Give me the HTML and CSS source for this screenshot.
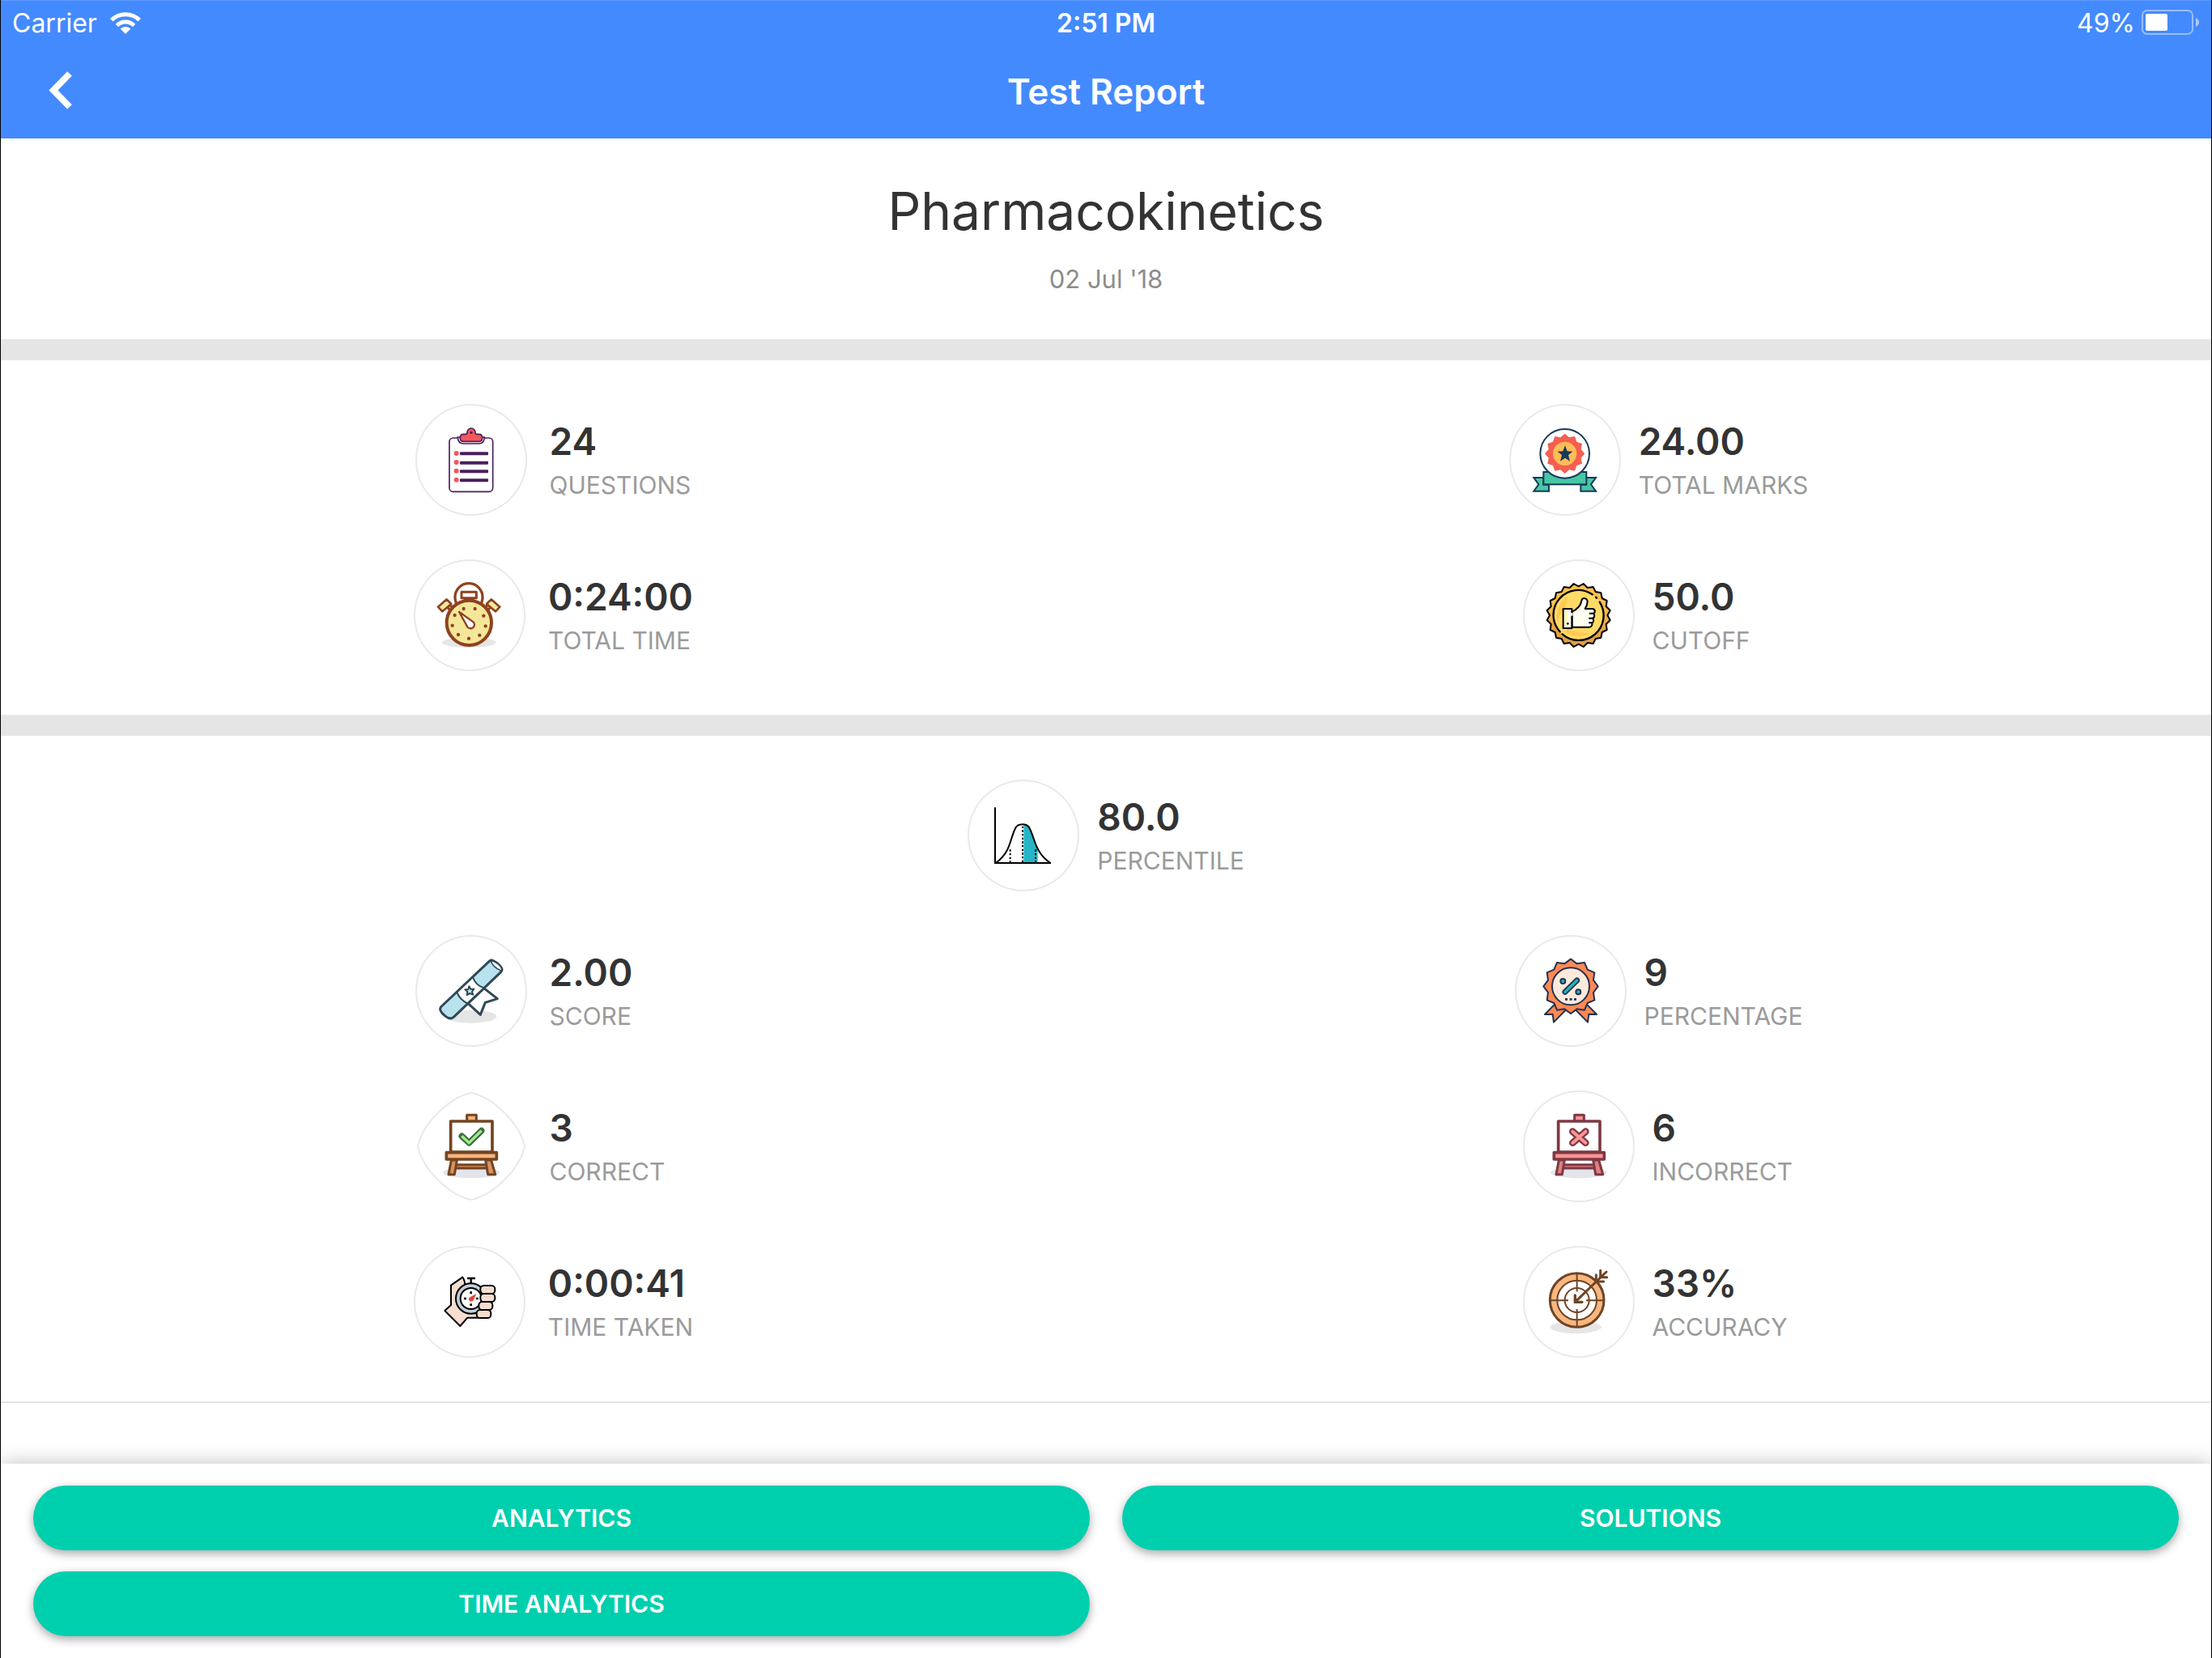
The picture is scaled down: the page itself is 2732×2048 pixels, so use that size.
FILE: index.html
```html
<!DOCTYPE html>
<html lang="en">
<head>
  <meta charset="UTF-8" />
  <meta name="viewport" content="width=device-width, initial-scale=1" />
  <title>Test Report</title>
  <link rel="stylesheet" href="styles.css">
</head>
<body>

<!-- shared easel for correct / incorrect -->
<svg class="defs" width="0" height="0" aria-hidden="true">
  <symbol id="easel" viewBox="39 606 414 414">
    <ellipse cx="246" cy="910" rx="105" ry="21" fill="#e4e4eb" />
    <g stroke="currentColor" stroke-width="9" stroke-linejoin="round">
      <rect x="188" y="881" width="116" height="13" class="easel-dark" />
      <path d="M172 864H193L184 917H162ZM320 864H299L308 917H335Z" class="easel-dark" />
      <rect x="230" y="697" width="35" height="24" class="easel-light" />
      <rect x="170" y="720" width="154" height="114" fill="#fff" stroke-width="11" />
      <rect x="154" y="836" width="186" height="25" class="easel-light" stroke-width="11" />
    </g>
  </symbol>
</svg>

<header class="header">
  <div class="status-bar">
    <div class="status-left">
      <span>Carrier</span>
      <svg class="wifi" viewBox="0 0 38 27" aria-hidden="true">
        <g fill="none" stroke="#fff" stroke-width="5">
          <path d="M1.8 9.8A24.3 24.3 0 0 1 36.2 9.8" />
          <path d="M8.4 16.4A15 15 0 0 1 29.6 16.4" />
        </g>
        <path d="M19 27L12.6 20.6A9 9 0 0 1 25.4 20.6Z" fill="#fff" />
      </svg>
    </div>
    <div class="status-time">2:51 PM</div>
    <div class="status-right">
      <span>49%</span>
      <svg class="battery" viewBox="0 0 72 32" aria-hidden="true">
        <rect x="1" y="1" width="62" height="29" rx="6" fill="none" stroke="#fff" stroke-opacity=".45" stroke-width="2" />
        <rect x="5" y="5" width="27" height="21" rx="2" fill="#fff" />
        <path d="M67 10Q71 12 71 15.500T67 21Z" fill="#fff" fill-opacity=".55" />
      </svg>
    </div>
  </div>
  <nav class="nav-bar">
    <button type="button" class="back" aria-label="Back">
      <svg viewBox="0 0 32 50" aria-hidden="true"><path d="M27 3L7 23.500L27 44" fill="none" stroke="#fff" stroke-width="8" /></svg>
    </button>
    <h1>Test Report</h1>
  </nav>
</header>

<main>

  <section class="intro">
    <h2>Pharmacokinetics</h2>
    <p>02 Jul '18</p>
  </section>

  <!-- test details -->
  <section class="stats">
    <div class="stat">
      <div class="icon">
        <svg viewBox="39 26 414 414" aria-hidden="true">
          <rect x="165" y="152" width="161" height="199" rx="14" fill="#fff" stroke="#4a1f5c" stroke-width="5" />
          <path d="M196 149Q197 173 218 173H274Q294 173 295 149Z" fill="#fff" stroke="#4a1f5c" stroke-width="5" />
          <path d="M218 138H225Q231 138 231 131A15 15 0 0 1 261 131Q261 138 267 138H275Q287 138 287 151T275 165H218Q205 165 205 151T218 138Z" fill="#f4565a" stroke="#4a1f5c" stroke-width="5" />
          <circle cx="246" cy="132" r="5" fill="#4a1f5c" />
          <g fill="#f4565a">
            <circle cx="191" cy="209" r="9" /><circle cx="191" cy="242" r="9" />
            <circle cx="191" cy="274" r="9" /><circle cx="191" cy="307" r="9" />
          </g>
          <g fill="#4a1f5c">
            <rect x="204" y="204" width="105" height="12" rx="3" /><rect x="204" y="238" width="105" height="12" rx="3" />
            <rect x="204" y="270" width="105" height="12" rx="3" /><rect x="204" y="303" width="105" height="12" rx="3" />
          </g>
        </svg>
      </div>
      <div class="stat-text"><strong>24</strong><span>QUESTIONS</span></div>
    </div>

    <div class="stat">
      <div class="icon">
        <svg viewBox="46 26 414 414" aria-hidden="true">
          <g fill="#48c7a4" stroke="#16395a" stroke-width="6">
            <path d="M137 299H173V325H193V349H137L155 324ZM367 299H331V325H311V349H367L349 324Z" />
            <rect x="173" y="278" width="159" height="46" />
          </g>
          <circle cx="252" cy="210" r="91" fill="#fff" stroke="#16395a" stroke-width="6" />
          <path fill="#f45f50" d="M252 136L268 150L289 146L296 166L316 173L312 194L326 210L312 226L316 247L296 254L289 274L268 270L252 284L236 270L215 274L208 254L188 247L192 226L178 210L192 194L188 173L208 166L215 146L236 150Z" />
          <circle cx="252" cy="210" r="44" fill="#ffbc58" />
          <path fill="#16395a" d="M253 180L261 201L281 202L265 215L271 238L253 226L235 238L241 215L225 202L245 201Z" />
        </svg>
      </div>
      <div class="stat-text"><strong>24.00</strong><span>TOTAL MARKS</span></div>
    </div>

    <div class="stat">
      <div class="icon">
        <svg viewBox="31 603 414 414" aria-hidden="true">
          <ellipse cx="235" cy="911" rx="100" ry="19" fill="#e6e6e6" />
          <g stroke="#8e431f" fill="#f5e79a" stroke-width="9" stroke-linejoin="round">
            <circle cx="235" cy="743" r="51" fill="#fff" stroke-width="10" />
            <path d="M155 779L171 798L180 789L166 771ZM316 779L300 798L291 789L305 771Z" />
            <path d="M121 779L153 751L170 768L137 796ZM350 779L318 751L301 768L334 796Z" stroke-width="8" />
            <rect x="220" y="740" width="30" height="26" />
            <rect x="208" y="724" width="55" height="22" fill="#fff" />
            <circle cx="236" cy="838" r="83" stroke-width="12" />
            <path d="M199 797L253 836A13 13 0 1 1 230 853Z" fill="#fff" stroke-width="7" />
          </g>
          <g fill="#8e431f">
            <circle cx="216" cy="786" r="6.500" /><circle cx="258" cy="786" r="6.500" /><circle cx="183" cy="810" r="6.500" />
            <circle cx="290" cy="812" r="6.500" /><circle cx="174" cy="848" r="6.500" /><circle cx="297" cy="850" r="6.500" />
            <circle cx="196" cy="882" r="6.500" /><circle cx="275" cy="884" r="6.500" /><circle cx="235" cy="896" r="6.500" />
          </g>
        </svg>
      </div>
      <div class="stat-text"><strong>0:24:00</strong><span>TOTAL TIME</span></div>
    </div>

    <div class="stat">
      <div class="icon">
        <svg viewBox="94 603 414 414" aria-hidden="true">
          <defs>
            <linearGradient id="seal" x1="0" y1="0" x2="0" y2="1">
              <stop offset=".3" stop-color="#fdc04c" /><stop offset=".8" stop-color="#e0a045" />
            </linearGradient>
          </defs>
          <path transform="translate(300 810)" fill="url(#seal)" stroke="#000" stroke-width="6" stroke-linejoin="round"
            d="M0-107L18-117L33-102L54-105L63-87L83-83L87-63L105-54L102-33L117-18L107 0L117 18L102 33L105 54L87 63L83 83L63 87L54 105L33 102L18 117L0 107L-18 117L-33 102L-54 105L-63 87L-83 83L-87 63L-105 54L-102 33L-117 18L-107 0L-117-18L-102-33L-105-54L-87-63L-83-83L-63-87L-54-105L-33-102L-18-117Z" />
          <circle cx="300" cy="810" r="92" fill="#ffda66" />
          <path d="M258 742Q212 776 220 836Q232 800 250 790ZM250 872Q300 900 345 876Q290 876 262 858Z" fill="#ffc850" />
          <g fill="none" stroke="#000" stroke-width="7" stroke-linecap="round">
            <path d="M231 871A92 92 0 0 1 351 733" />
            <path d="M378 761A92 92 0 0 1 240 880" />
            <path d="M364 743L367 746" />
          </g>
          <g fill="#fffff0" stroke="#000" stroke-width="6" stroke-linejoin="round" stroke-linecap="round">
            <path d="M276 797C296 787 308 776 311 756C313 744 327 744 332 754C335 766 330 776 324 786H352C363 788 363 801 354 803C361 807 360 819 352 821C357 825 357 836 350 838C351 847 348 854 340 854H276Z" />
            <path d="M342 803H354M340 821H352M340 838H350" />
            <rect x="243" y="786" width="32" height="72" />
          </g>
          <path d="M253 793V850" stroke="#fff6a8" stroke-width="8" />
          <circle cx="260" cy="841" r="4" />
          <path d="M275 801V812" stroke="#fffff0" stroke-width="7" />
        </svg>
      </div>
      <div class="stat-text"><strong>50.0</strong><span>CUTOFF</span></div>
    </div>
  </section>

  <!-- result -->
  <section class="stats">
    <div class="stat stat-wide">
      <div class="icon">
        <svg viewBox="39 39 414 414" aria-hidden="true">
          <path d="M247 204C260 205 266 212 270 222C280 245 286 272 299 299V346H247Z" fill="#25b5c5" />
          <g fill="none" stroke="#000" stroke-width="6">
            <path d="M141 142V348H348" />
            <path d="M145 347C200 305 195 262 215 222C223 199 262 199 270 222C290 262 290 310 346 348" />
            <path d="M197 298V346M243 212V346M291 298V346" stroke-dasharray="7 7" />
          </g>
        </svg>
      </div>
      <div class="stat-text"><strong>80.0</strong><span>PERCENTILE</span></div>
    </div>

    <div class="stat">
      <div class="icon">
        <svg viewBox="39 30 414 414" aria-hidden="true">
          <ellipse cx="245" cy="332" rx="95" ry="24" fill="#e5e5e5" />
          <g stroke="#2f4858" stroke-width="9" stroke-linejoin="round">
            <path d="M292 226L343 266L298 280L280 325L234 283Z" fill="#fff" />
            <path d="M133 297L312 128Q319 120 329 126Q346 134 357 150Q363 158 357 166L180 335Q168 344 151 331Q124 310 133 297Z" fill="#b9e3ec" />
            <path d="M318 124Q324 148 358 163Q362 156 355 147Q342 129 318 124Z" fill="#fff" stroke-width="5" />
            <path d="M252 186L193 242Q204 270 232 283L293 226Q262 216 252 186Z" fill="#fff" stroke-width="6" />
            <path d="M238 220L244 230L256 230L249 240L253 251L241 246L230 252L232 240L223 232L235 231Z" fill="#b9e3ec" stroke-width="6" />
          </g>
        </svg>
      </div>
      <div class="stat-text"><strong>2.00</strong><span>SCORE</span></div>
    </div>

    <div class="stat">
      <div class="icon">
        <svg viewBox="57 30 414 414" aria-hidden="true">
          <g fill="#ff8955" stroke="#25314f" stroke-width="6" stroke-linejoin="round">
            <path d="M205 286L168 324L197 323L201 353L250 303ZM323 286L360 324L331 323L327 353L278 303Z" />
            <path transform="translate(264 220)" d="M0-101L23-84L51-88L62-62L88-51L84-23L101 0L84 23L88 51L62 62L51 88L23 84L0 101L-23 84L-51 88L-62 62L-88 51L-84 23L-101 0L-84-23L-88-51L-62-62L-51-88L-23-84Z" />
            <circle cx="264" cy="220" r="69" fill="#fdeadd" />
          </g>
          <g stroke="#25314f" stroke-width="6" fill="#1fb8b8">
            <circle cx="235" cy="201" r="9" /><circle cx="292" cy="241" r="9" />
          </g>
          <g fill="none" stroke-linecap="round">
            <path d="M243 241L287 198" stroke="#25314f" stroke-width="21" />
            <path d="M243 241L287 198" stroke="#1fb8b8" stroke-width="10" />
          </g>
          <path d="M243 264h9v8h-9zM260 264h9v8h-9zM276 264h9v8h-9z" fill="#25314f" />
        </svg>
      </div>
      <div class="stat-text"><strong>9</strong><span>PERCENTAGE</span></div>
    </div>

    <div class="stat">
      <div class="icon icon-soft">
        <svg class="easel-brown" viewBox="0 0 414 414" aria-hidden="true">
          <path d="M207 8C291 27 387 123 405 207C387 291 291 387 207 405C123 387 27 291 9 207C27 123 123 27 207 8Z" fill="none" stroke="#e9e9e9" stroke-width="6" />
          <use href="#easel" width="414" height="414" />
          <g fill="none" stroke-linejoin="round" stroke-linecap="square">
            <path d="M172 169L199 194L245 149" stroke="#3d6e42" stroke-width="23" stroke-linecap="round" />
            <path d="M172 169L199 194L245 149" stroke="#a4e88f" stroke-width="10" stroke-linecap="butt" />
          </g>
        </svg>
      </div>
      <div class="stat-text"><strong>3</strong><span>CORRECT</span></div>
    </div>

    <div class="stat">
      <div class="icon">
        <svg class="easel-red" viewBox="0 0 414 414" aria-hidden="true">
          <use href="#easel" width="414" height="414" />
          <g fill="none" stroke-linecap="round">
            <path d="M184 152L232 194M232 152L184 194" stroke="#7d3a45" stroke-width="26" />
            <path d="M184 152L232 194M232 152L184 194" stroke="#ff9494" stroke-width="12" />
          </g>
        </svg>
      </div>
      <div class="stat-text"><strong>6</strong><span>INCORRECT</span></div>
    </div>

    <div class="stat">
      <div class="icon">
        <svg viewBox="39 57 414 414" aria-hidden="true">
          <g fill="#f5ddd0" stroke="#000" stroke-width="6" stroke-linejoin="round">
            <path d="M154 297L177 276V203L220 173Q230 186 228 206L280 323H238L211 354Z" />
            <circle cx="251" cy="252" r="56" fill="#c3cdd8" />
            <circle cx="251" cy="252" r="39" fill="#fff" />
            <path d="M251 180V196M237 177H267" stroke-width="7" />
            <rect x="286" y="204" width="54" height="30" rx="13" />
            <rect x="286" y="234" width="54" height="30" rx="13" />
            <rect x="280" y="264" width="51" height="30" rx="13" />
            <rect x="272" y="294" width="53" height="30" rx="13" />
          </g>
          <path d="M247 226h8v9h-8zM247 271h8v8h-8zM225 248h9v8h-9zM270 248h8v8h-8z" />
          <path d="M271 234L245 248Q240 255 246 261Q255 266 261 257Z" fill="#e04a35" />
        </svg>
      </div>
      <div class="stat-text"><strong>0:00:41</strong><span>TIME TAKEN</span></div>
    </div>

    <div class="stat">
      <div class="icon">
        <svg viewBox="94 57 414 414" aria-hidden="true">
          <ellipse cx="290" cy="358" rx="95" ry="23" fill="#e6e6e6" />
          <g fill="#fff" stroke="#6f4426" stroke-width="6">
            <circle cx="294" cy="258" r="100" fill="#f9b77f" stroke-width="9" />
            <circle cx="294" cy="258" r="73" />
            <circle cx="294" cy="258" r="45" />
            <path d="M294 158V226M294 291V358M194 259H262M328 259H394" />
          </g>
          <g fill="none" stroke="#6f4426" stroke-width="9" stroke-linecap="round">
            <path d="M290 262L403 153" />
            <path d="M287 240V265H313" stroke-width="10" />
            <path d="M365 164V189H393M381 148V173H405" />
          </g>
        </svg>
      </div>
      <div class="stat-text"><strong>33%</strong><span>ACCURACY</span></div>
    </div>
  </section>

</main>

<footer class="actions">
  <button type="button">ANALYTICS</button>
  <button type="button">SOLUTIONS</button>
  <button type="button">TIME ANALYTICS</button>
</footer>

</body>
</html>
```
FILE: styles.css
```css
* {
  box-sizing: border-box;
}
body {
  margin: 0;
  min-height: 100vh;
  display: flex;
  flex-direction: column;
  font-family: Inter, "Liberation Sans", sans-serif;
  color: #333;
  background-color: #fff;
  border-left: 1px solid #000;
  border-right: 1px solid #000;
}
h1, h2, p {
  margin: 0;
}
.defs {
  position: absolute;
}

/* header */
.header {
  background-color: #448aff;
  color: #fff;
  border-top: 1px solid #5f9bff;
}
.status-bar {
  display: grid;
  grid-template-columns: 1fr auto 1fr;
  align-items: center;
  height: 54px;
  padding: 0 14px;
  font-size: 32px;
}
.status-left, .status-right {
  display: flex;
  align-items: center;
}
.status-left {
  gap: 16px;
}
.status-right {
  justify-content: flex-end;
  gap: 8px;
}
.status-time {
  font-weight: 600;
}
.wifi {
  width: 38px;
  height: 27px;
}
.battery {
  width: 72px;
  height: 32px;
}
.nav-bar {
  display: grid;
  grid-template-columns: 1fr auto 1fr;
  align-items: center;
  height: 116px;
  padding: 0 48px;
}
.nav-bar h1 {
  font-size: 44px;
  font-weight: 600;
}
.back {
  width: 52px;
  padding: 0 10px;
  border: none;
  background: none;
  cursor: pointer;
}
.back svg {
  display: block;
  width: 32px;
  height: 50px;
}

/* title */
.intro {
  padding: 50px 20px 54px;
  text-align: center;
}
.intro h2 {
  font-size: 64px;
  line-height: 80px;
  font-weight: 400;
}
.intro p {
  margin-top: 24px;
  font-size: 31px;
  line-height: 40px;
  color: #8c8c8c;
}

/* stats */
.stats {
  display: grid;
  grid-template-columns: 1fr 1fr;
  gap: 54px 0;
  padding: 54px 0;
  border-top: 26px solid #e5e5e5;
}
.stats:last-child {
  border-bottom: 2px solid #e5e5e5;
}
.stat {
  display: flex;
  justify-content: center;
  align-items: center;
  gap: 22px;
}
.stat-wide {
  grid-column: 1 / -1;
}
.icon {
  width: 138px;
  height: 138px;
  border-radius: 50%;
  box-shadow: inset 0 0 0 2px #e9e9e9;
}
.icon-soft {
  box-shadow: none;
}
.icon svg {
  display: block;
  width: 100%;
  height: 100%;
}
.stat-text {
  min-width: 176px;
  padding-top: 8px;
}
.stat-text strong, .stat-text span {
  display: block;
  line-height: 54px;
}
.stat-text strong {
  font-size: 46px;
  font-weight: 600;
}
.stat-text span {
  font-size: 30px;
  color: #9b9b9b;
}
/* left column sits a little further from its icon */
.stats:not(:last-child) .stat:nth-child(odd),
.stats:last-child .stat:nth-child(even) {
  gap: 28px;
}
.easel-brown {
  color: #734523;
  --light: #fab57c;
  --dark: #d9935f;
}
.easel-red {
  color: #7d3a45;
  --light: #ff9494;
  --dark: #e07f85;
}
.easel-light {
  fill: var(--light);
}
.easel-dark {
  fill: var(--dark);
}

/* bottom buttons */
.actions {
  display: grid;
  grid-template-columns: 1fr 1fr;
  gap: 26px 40px;
  margin-top: auto;
  padding: 27px 40px;
  background-color: #fff;
  box-shadow: 0 0 24px rgba(0, 0, 0, 0.25);
}
.actions button {
  height: 80px;
  border: none;
  border-radius: 40px;
  background-color: #00cfae;
  color: #fff;
  font-family: inherit;
  font-size: 30px;
  font-weight: 600;
  cursor: pointer;
  box-shadow: 0 4px 12px rgba(0, 0, 0, 0.35);
}
```
